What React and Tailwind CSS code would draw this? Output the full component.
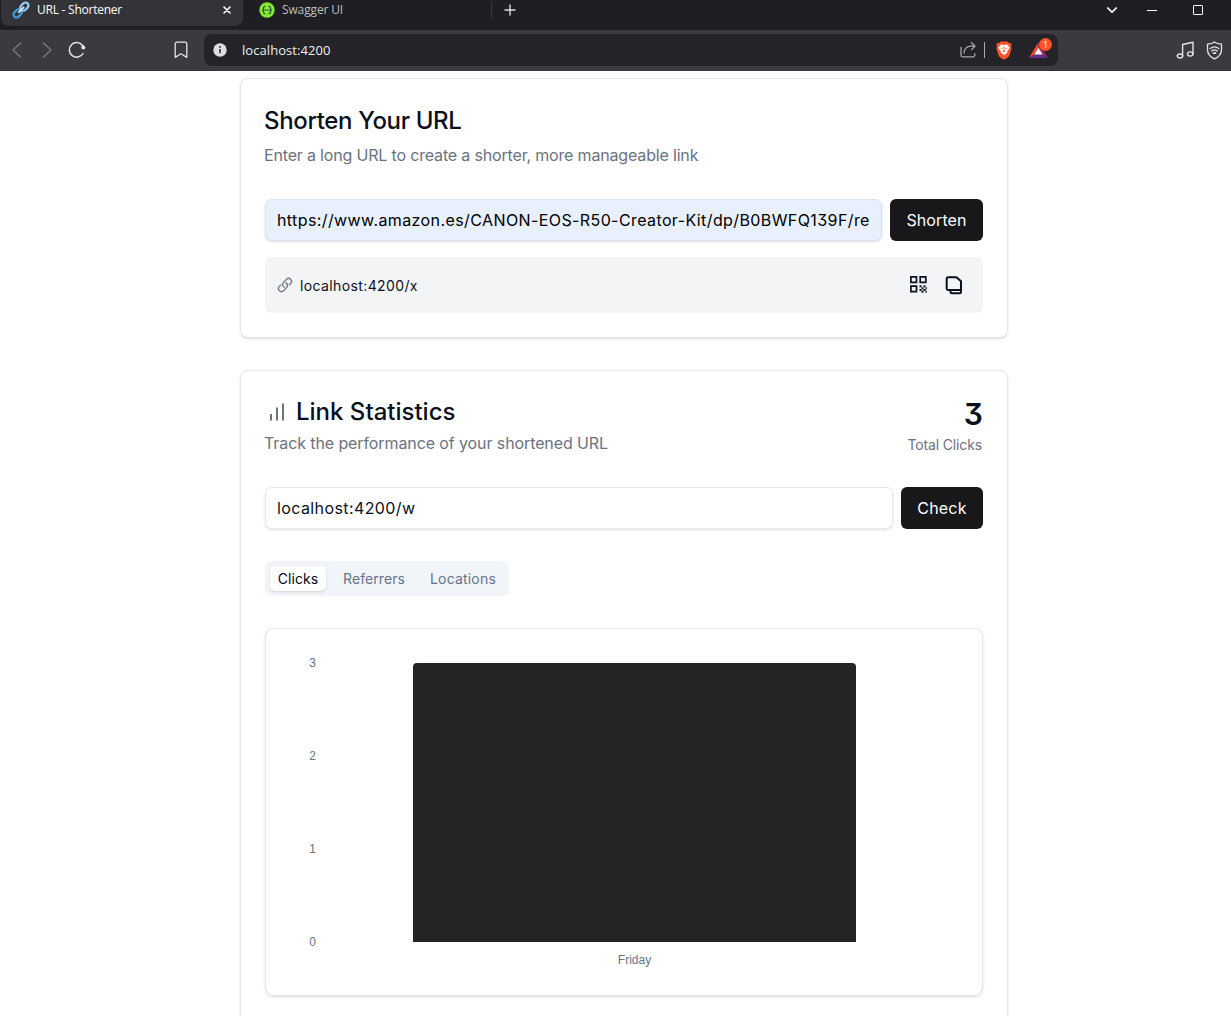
import React from "react";

const stroke = { fill: "none", stroke: "currentColor", strokeLinecap: "round", strokeLinejoin: "round" };

function ChainLogo() {
  return (
    <svg className="h-[18px] w-[18px]" viewBox="0 0 18 18" {...stroke}>
      <g transform="rotate(-45 9 9)" strokeWidth="2.3">
        <rect x="-0.3" y="6" width="9" height="6" rx="3" stroke="#3f9bd8" />
        <rect x="9.3" y="6" width="9" height="6" rx="3" stroke="#8fcdf5" />
        <path d="M6 9h6.5" stroke="#c5e6fb" strokeWidth="2" />
      </g>
    </svg>
  );
}

function SwaggerLogo() {
  return (
    <svg className="h-4 w-4" viewBox="0 0 16 16" {...stroke}>
      <circle cx="8" cy="8" r="7.7" fill="#85ea2d" stroke="none" />
      <path d="M6 4.2c-1.3 0-1.4.5-1.4 1.6 0 1.3-.2 2-1.2 2.2 1 .2 1.2.9 1.2 2.2 0 1.1.1 1.6 1.4 1.6M10 4.2c1.3 0 1.4.5 1.4 1.6 0 1.3.2 2 1.2 2.2-1 .2-1.2.9-1.2 2.2 0 1.1-.1 1.6-1.4 1.6" stroke="#173647" strokeWidth="1.1" />
      <path d="M6 8h.1M8 8h.1M10 8h.1" stroke="#173647" strokeWidth="1.3" />
    </svg>
  );
}

function BraveLogo() {
  return (
    <svg className="h-[19px] w-4" viewBox="0 0 16 19">
      <path d="M4.6.5h6.8l1.4 1.5 1.6-.2 1.3 2-.7 1.5.6 1.9-2.1 7.1c-.3 1-.8 1.6-1.6 2.1L8 18.8l-3.9-2.4c-.8-.5-1.3-1.1-1.6-2.1L.4 7.2 1 5.3.3 3.8l1.3-2 1.6.2z" fill="#fb542b" />
      <path d="M5 3.5l3 .5 3-.5 2.500 2.700-.5 1.800-2 2.600.3 1.200-1.700 1L8 14.500l-1.600-1.700-1.700-1 .3-1.200-2-2.600-.5-1.800z" fill="#fff" />
      <path d="M4.300 6.500l2.300.8-.4 1zM11.700 6.500l-2.300.8.4 1zM7.500 5.500h1l-.2 3.500 1.100 1.200L8 11.200l-1.400-1L7.700 9z" fill="#fb542b" />
    </svg>
  );
}

function RewardsLogo() {
  return (
    <div className="relative h-5 w-6">
      <svg className="absolute top-[4px] left-0 h-4 w-[19px]" viewBox="0 0 19 16">
        <path d="M9.500 0L0 16l5.500-3.500 4-6.500z" fill="#ff4724" />
        <path d="M9.500 0L19 16l-5.500-3.500-4-6.500z" fill="#9e1f63" />
        <path d="M0 16l5.500-3.800h8L19 16z" fill="#662d91" />
        <path d="M9.500 5.800l4.200 6.800H5.300z" fill="#fff" />
      </svg>
      <span className="absolute top-0 left-[10px] flex h-[13px] w-[13px] items-center justify-center rounded-full bg-[#fb542b] font-['Open_Sans'] text-[9px] leading-none text-white">1</span>
    </div>
  );
}

function BrowserChrome() {
  return (
    <header className="h-[71px] shrink-0 font-['Open_Sans',sans-serif]">
      <div className="flex h-[30px] bg-[#1f1e23]">
        <div className="ml-px flex h-[26px] w-[242px] items-center rounded-b-lg bg-[#343338] pr-[10px] pb-[6px] pl-[11px] text-white">
          <ChainLogo />
          <span className="ml-[7px] flex-1 text-[12px] tracking-[-0.24px] whitespace-nowrap">URL - Shortener</span>
          <svg className="h-3 w-3" viewBox="0 0 12 12" {...stroke} strokeWidth="1.600"><path d="M3 3l6 6M9 3L3 9" /></svg>
        </div>
        <div className="flex h-5 flex-1 items-center pl-[16px]">
          <SwaggerLogo />
          <span className="ml-[7px] w-[209px] text-[12px] tracking-[-0.14px] whitespace-nowrap text-[#bdbdc0]">Swagger UI</span>
          <span className="h-4 w-px bg-[#3b3a3f]" />
          <svg className="ml-3 h-3 w-3 text-[#dcdcdd]" viewBox="0 0 12 12" {...stroke} strokeWidth="1.400"><path d="M6 1v10M1 6h10" /></svg>
        </div>
        <div className="flex h-5 items-center text-white">
          <svg className="mr-[29px] h-3 w-3" viewBox="0 0 12 12" {...stroke} strokeWidth="1.700"><path d="M1.700 4L6 8.200 10.300 4" /></svg>
          <span className="mr-9 h-px w-[10px] bg-white" />
          <span className="mr-[28px] h-[10px] w-[10px] rounded-[1px] border border-white" />
        </div>
      </div>
      <div className="flex h-[41px] items-center border-b border-[#343038] bg-[#3b3a3f] text-[#e4e3e8]">
        <svg className="ml-[11px] h-4 w-3 text-[#77767b]" viewBox="0 0 12 16" {...stroke} strokeWidth="1.400"><path d="M9.500 1L2 8l7.500 7" /></svg>
        <svg className="ml-[18px] h-4 w-3 text-[#77767b]" viewBox="0 0 12 16" {...stroke} strokeWidth="1.400"><path d="M2.500 1L10 8l-7.500 7" /></svg>
        <svg className="ml-[14px] h-[18px] w-5" viewBox="0 0 20 18" {...stroke} strokeWidth="1.500">
          <path d="M16 12.500A7.300 7.300 0 1 1 15.500 4.500" /><circle cx="16.300" cy="6.500" r="2" fill="currentColor" stroke="none" /><path d="M15.300 4.200l1.200 2.200" />
        </svg>
        <svg className="ml-[87px] h-[18px] w-[14px]" viewBox="0 0 14 18" {...stroke} strokeWidth="1.300"><path d="M1.200 3.200a2 2 0 0 1 2-2h7.600a2 2 0 0 1 2 2v13.200L7 12.800l-5.800 3.600z" /></svg>
        <div className="ml-4 flex h-8 w-[854px] items-center rounded-lg bg-[#242328]">
          <svg className="ml-[9px] h-[14px] w-[14px]" viewBox="0 0 14 14"><circle cx="7" cy="7" r="6.700" fill="#dedde2" /><path d="M7 6v4.300" stroke="#39383d" strokeWidth="1.700" /><circle cx="7" cy="3.900" r="1" fill="#39383d" /></svg>
          <span className="mt-px ml-[15px] flex-1 text-[13px] tracking-[0.064px] text-[#f0eff2]">localhost:4200</span>
          <svg className="h-4 w-4 text-[#a8a7ac]" viewBox="0 0 16 16" {...stroke} strokeWidth="1.300"><path d="M1 5.500v7.800a1.500 1.500 0 0 0 1.500 1.500h10.800a1.500 1.500 0 0 0 1.500-1.500v-1.600M4 11c0-4 3-6.800 6.500-6.800H15M11.500.8L15 4.200l-3.500 3.400" /></svg>
          <span className="ml-2 h-4 w-px bg-[#a8a7ac]" />
          <span className="ml-[11px]"><BraveLogo /></span>
          <span className="mr-[5px] ml-[17px] pb-[5px]"><RewardsLogo /></span>
        </div>
        <svg className="ml-[118px] h-[18px] w-[18px]" viewBox="0 0 18 18" {...stroke} strokeWidth="1.400"><path d="M6.600 14.800V3.500L17 1.300v11.600" /><ellipse cx="4" cy="15" rx="2.700" ry="2" /><ellipse cx="14.200" cy="13" rx="2.700" ry="2.100" /></svg>
        <svg className="ml-3 h-[19px] w-[17px]" viewBox="0 0 17 19" {...stroke} strokeWidth="1.300"><path d="M8.500 1c2 1.500 4.500 2 7 2.200v5.300c0 4.500-2.800 7.500-7 9.400-4.200-1.900-7-4.900-7-9.400V3.200C4 3 6.500 2.500 8.500 1z" /><path d="M4.200 7.600c2.600-2 6-2 8.600 0M5.800 9.900c1.700-1.200 3.700-1.200 5.400 0" /><path d="M7.500 12.100h2" strokeWidth="1.800" /></svg>
      </div>
    </header>
  );
}

function ShortenCard() {
  return (
    <section className="flex h-[260px] shrink-0 flex-col rounded-lg border border-[#e5e7eb] bg-white px-6 pt-6 shadow-sm">
      <h2 className="mt-[2px] -ml-px text-[24px] leading-8 font-medium tracking-[-0.35px]">Shorten Your URL</h2>
      <p className="mt-[6px] -ml-px text-[16px] leading-6 tracking-[-0.170px] text-[#6b7280]">Enter a long URL to create a shorter, more manageable link</p>
      <div className="mt-8 flex gap-2">
        <div className="flex h-[42px] min-w-0 flex-1 items-center rounded-[7px] border border-[#dde3ee] bg-[#e8f0fe] px-[11px] text-[16px] tracking-[0.4px] whitespace-nowrap text-black shadow-sm">https://www.amazon.es/CANON-EOS-R50-Creator-Kit/dp/B0BWFQ139F/re</div>
        <button className="h-[42px] w-[93px] shrink-0 rounded-md bg-[#18181b] text-[16px] tracking-[0.1px] text-white">Shorten</button>
      </div>
      <div className="mt-4 flex h-14 items-center rounded-md bg-[#f3f4f6] pr-5 pl-3">
        <svg className="h-4 w-4 text-[#6b7280]" viewBox="0 0 24 24" {...stroke} strokeWidth="2"><path d="M13.190 8.688a4.500 4.500 0 0 1 1.242 7.244l-4.500 4.500a4.500 4.500 0 0 1-6.364-6.364l1.757-1.757m13.350-.622 1.757-1.757a4.500 4.500 0 0 0-6.364-6.364l-4.500 4.500a4.500 4.500 0 0 0 1.242 7.244" /></svg>
        <span className="ml-[7px] flex-1 text-[14px] tracking-[0.38px]">localhost:4200/x</span>
        <svg className="mb-[2px] h-[17px] w-[17px]" viewBox="0 0 17 17" fill="none" stroke="currentColor" strokeWidth="1.700">
          <path d="M.9.9h5.600v5.400H.9zM10.200.9h5.600v5.400h-5.600zM.9 10.200h5.600v5.400H.9z" />
          <path d="M9.500 10.300h2M13.500 10.300h2M11.500 12.200h2M15.500 12.200h1.300M9.500 14h2M13.500 14h2M11.500 15.800h2M15.500 15.800h1.300" strokeWidth="1.900" />
        </svg>
        <svg className="ml-[18px] h-[19px] w-[18px]" viewBox="0 0 18 19" {...stroke} strokeWidth="2"><path d="M3.200 1.300h8.300l4.500 4v7.200a1.500 1.500 0 0 1-1.500 1.500H3.200a1.500 1.500 0 0 1-1.500-1.500V2.800a1.500 1.500 0 0 1 1.500-1.500zM5.500 14.500v1.300a1.500 1.500 0 0 0 1.500 1.500h7.500a1.500 1.500 0 0 0 1.500-1.500v-4" /></svg>
      </div>
    </section>
  );
}

function Chart() {
  return (
    <div className="mt-8 flex h-[368px] flex-col rounded-lg border border-[#e5e7eb] pt-[25px] text-[12px] leading-[18px] text-[#64748b] shadow-sm">
      <div className="flex h-[297px]">
        <div className="flex w-[50px] flex-col justify-between text-right font-['Liberation_Sans',sans-serif]">
          <span>3</span><span>2</span><span>1</span><span>0</span>
        </div>
        <div className="mt-[9px] ml-[97px] h-[279px] w-[443px] rounded-t bg-[#242424]" />
      </div>
      <span className="ml-[147px] w-[443px] text-center font-['Liberation_Sans',sans-serif]">Friday</span>
    </div>
  );
}

function StatisticsCard() {
  return (
    <section className="mt-8 flex h-[700px] shrink-0 flex-col rounded-lg border border-[#e5e7eb] bg-white px-6 pt-6 shadow-sm">
      <div className="flex h-[92px] justify-between">
        <div>
          <div className="flex h-8 items-center">
            <svg className="mr-[7px] h-6 w-6 text-[#6b7280]" viewBox="0 0 24 24" {...stroke} strokeLinecap="butt" strokeWidth="2"><path d="M6 21.500v-6.500M12 21.500V8.500M18 21.500V4.500" /></svg>
            <h2 className="pt-[2px] text-[24px] leading-8 font-medium">Link Statistics</h2>
          </div>
          <p className="mt-1 -ml-px text-[16px] leading-6 tracking-[-0.1px] text-[#6b7280]">Track the performance of your shortened URL</p>
        </div>
        <div className="pt-px text-right">
          <div className="text-[30px] leading-9 font-semibold">3</div>
          <div className="mt-[3px] mr-px text-[14px] leading-5 tracking-[-0.147px] text-[#6b7280]">Total Clicks</div>
        </div>
      </div>
      <div className="flex gap-2">
        <div className="flex h-[42px] flex-1 items-center rounded-[7px] border border-[#e5e7eb] px-[11px] text-[16px] tracking-[0.4px] shadow-sm">localhost:4200/w</div>
        <button className="h-[42px] w-[82px] shrink-0 rounded-md bg-[#18181b] text-[16px] tracking-[0.2px] text-white">Check</button>
      </div>
      <div className="mt-8 flex h-[35px] w-[244px] items-center rounded-md bg-[#f1f5f9] pl-[5px] text-[14px] text-[#64748b]">
        <span className="flex h-[25px] w-[56px] items-center justify-center rounded-[5px] bg-white tracking-[0.05px] text-[#020617] shadow-sm">Clicks</span>
        <span className="ml-[17px] w-[87px] tracking-[0.08px]">Referrers</span>
        <span className="tracking-[0.18px]">Locations</span>
      </div>
      <Chart />
    </section>
  );
}

export default function App() {
  return (
    <div className="flex h-screen flex-col overflow-hidden bg-white">
      <BrowserChrome />
      <main className="ml-[240px] flex min-h-0 w-[768px] flex-1 flex-col pt-[7px] font-['Inter',sans-serif] text-[#0a1020] [font-feature-settings:'cv09']">
        <ShortenCard />
        <StatisticsCard />
      </main>
    </div>
  );
}
